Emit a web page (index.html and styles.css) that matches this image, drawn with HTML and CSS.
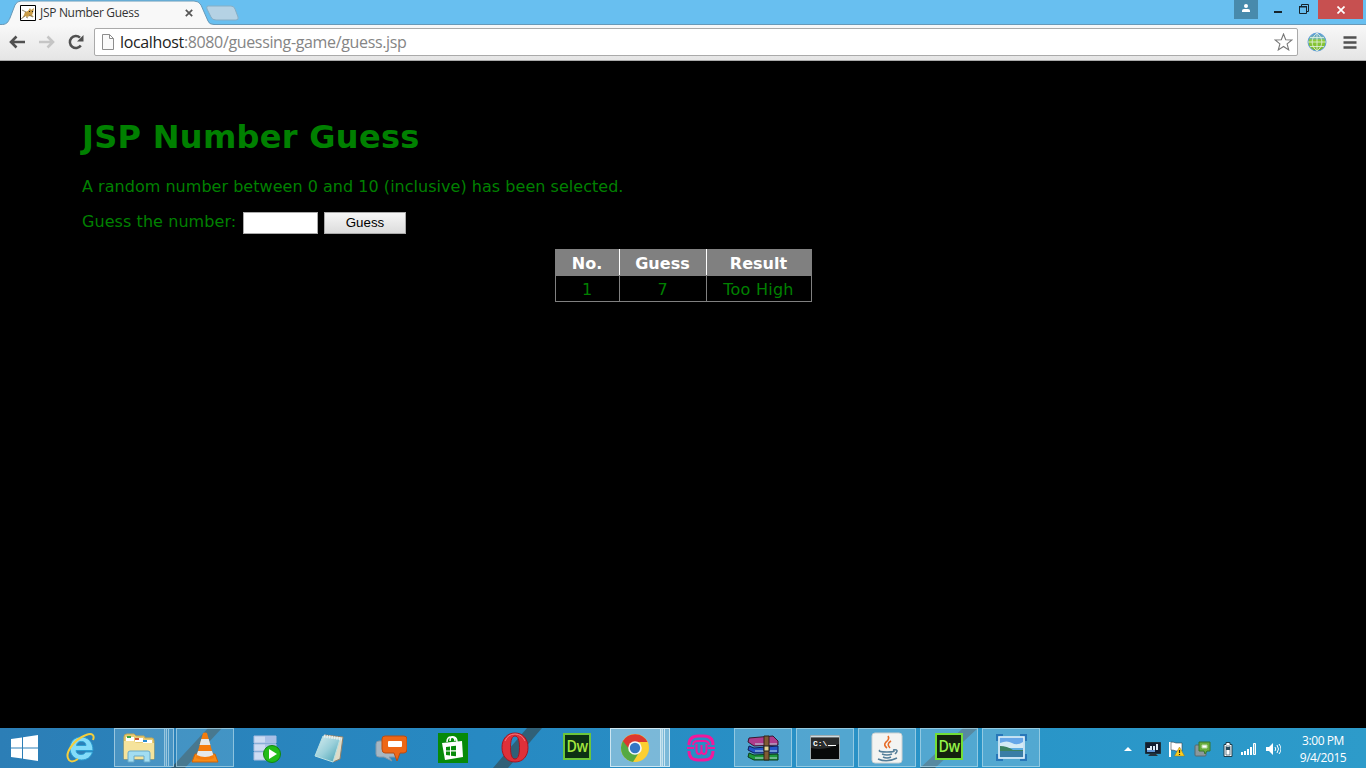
FILE: index.html
```html
<!DOCTYPE html>
<html lang="en">
<head>
<meta charset="utf-8">
<title>JSP Number Guess</title>
<link rel="stylesheet" href="styles.css">
</head>
<body>
<div class="screen">
  <header class="titlebar">
    <svg class="tab-shapes" width="250" height="25" viewBox="0 0 250 25">
      <path d="M0 24.500C7 25 8 22 10 18L15 5Q17 1 21 1H194Q199 1 201 5L208 21Q209 24.500 214 24.500V26H0Z" fill="#f8f8f8" stroke="#6799b8"/>
      <path d="M208 6H231Q234 6 235 9L238 17Q239 20 236 20H216Q212 20 211 17L207 9Q206 6 208 6Z" fill="#b5d2e4" stroke="#86aec5"/>
    </svg>
    <div class="tab">
      <svg class="favicon" width="16" height="16" viewBox="0 0 16 16"><path fill="#fff" stroke="#000" d="M.5.500h15v15H.5z"/><path d="M2 13l2-3 1-3 3-1 2-3 1 2 3-2-1 5-1 2 2 2-4-1-3 1-2-1z" fill="#c99c48"/><path d="M2 5l4 2M1 14l4-3M6 12l2 1M9 10l4 2" fill="none" stroke="#756c50" stroke-width=".8"/><path d="M9 6h1v1H9zM12 6h1v1h-1z" fill="#222"/></svg>
      <span class="tab-title">JSP Number Guess</span>
      <svg width="8" height="8" viewBox="0 0 8 8"><path d="M.8.800l6.400 6.400M7.200.800L.8 7.200" stroke="#555" stroke-width="1.700"/></svg>
    </div>
    <div class="window-controls">
      <span class="profile"><svg width="10" height="9" viewBox="0 0 10 9"><circle cx="5" cy="2" r="2" fill="#fff"/><path d="M1 8V6.500Q1 5 3 5h4q2 0 2 1.500V8z" fill="#fff"/></svg></span>
      <svg class="minimize" width="8" height="2"><path d="M0 0h8v2H0z" fill="#16242c"/></svg>
      <svg class="restore" width="10" height="10" viewBox="0 0 10 10"><path d="M2.500 2V.5h7v7H8" fill="none" stroke="#16242c"/><path d="M.5 2.500h7v7h-7z" fill="none" stroke="#16242c"/><path d="M0 2h8v1.500H0z" fill="#16242c"/></svg>
      <span class="close"><svg width="8" height="8" viewBox="0 0 8 8"><path d="M.5.500l7 7M7.500.500l-7 7" stroke="#fff" stroke-width="1.700"/></svg></span>
    </div>
  </header>

  <nav class="toolbar">
    <svg class="back" width="16" height="14" viewBox="0 0 16 14"><path d="M7.500 1.500L2 7l5.500 5.500M2 7h14" fill="none" stroke="#505050" stroke-width="2.600"/></svg>
    <svg class="forward" width="16" height="14" viewBox="0 0 16 14"><path d="M8.500 1.500L14 7l-5.500 5.500M14 7H0" fill="none" stroke="#c5c5c5" stroke-width="2.600"/></svg>
    <svg class="reload" width="16" height="16" viewBox="0 0 16 16"><path d="M12.800 11.500A6 6 0 1 1 12 3.700" fill="none" stroke="#505050" stroke-width="2.500"/><path d="M15.500 1v6.500H9z" fill="#505050"/></svg>
    <div class="address">
      <svg width="12" height="16" viewBox="0 0 12 16"><path d="M.5.500h7l4 4v11H.5zM7.500.500v4h4" fill="#fafafa" stroke="#8d8d8d"/></svg>
      <span class="url"><span class="host">localhost</span>:8080/guessing-game/guess.jsp</span>
      <svg class="star" width="19" height="18" viewBox="0 0 19 18"><path d="M9.500 1l2.200 5.700 6.200.3-4.800 3.900 1.600 6-5.200-3.400-5.200 3.400 1.600-6L1.100 7l6.200-.3z" fill="#fff" stroke="#777" stroke-width="1.100"/></svg>
    </div>
    <svg class="globe" width="20" height="20" viewBox="0 0 20 20"><defs><linearGradient id="globeFill" x2="0" y2="1"><stop stop-color="#5799d6"/><stop offset=".3" stop-color="#75b8ad"/><stop offset=".4" stop-color="#8ecb37"/><stop offset="1" stop-color="#78b52e"/></linearGradient></defs><circle cx="10" cy="10" r="9" fill="url(#globeFill)" stroke="#5f9eda"/><path d="M10 1v18M1 10h18M3 5.500h14M3 14.500h14M10 1C3.500 6 3.500 14 10 19M10 1c6.500 5 6.500 13 0 18" fill="none" stroke="#e6f3e5" stroke-width=".8"/></svg>
    <svg class="menu" width="14" height="13"><path d="M.5 1.500h13M.5 6.500h13M.5 11.500h13" stroke="#505050" stroke-width="2.600"/></svg>
  </nav>

  <main class="page">
    <h1>JSP Number Guess</h1>
    <p class="intro">A random number between 0 and 10 (inclusive) has been selected.</p>
    <form class="guess-form">
      <label for="guess">Guess the number:</label>
      <input id="guess" type="text">
      <button type="button">Guess</button>
    </form>
    <table class="results">
      <thead><tr><th class="col-no">No.</th><th class="col-guess">Guess</th><th class="col-result">Result</th></tr></thead>
      <tbody><tr><td>1</td><td>7</td><td><span class="verdict">Too High</span></td></tr></tbody>
    </table>
  </main>

  <footer class="taskbar">
    <svg class="streaks" width="1366" height="40"><path d="M208 0h14l-37 40h-14zM527 0h15l-34 40h-15zM963 0h15l-43 40h-15z" fill="#34515d" opacity=".75"/></svg>
    <div class="apps">
      <span class="start"><svg width="27" height="26" viewBox="0 0 27 26"><path d="M0 4l11-1.500v10H0zM12 2.300L27 0v12.500H12zM0 13.500h11v10L0 22zM12 13.500h15V26l-15-2.300z" fill="#fff"/></svg></span>
      <span class="app"><svg width="30" height="32" viewBox="0 0 30 32"><path d="M15 5C8 5 4 10 4 16.500S9 28 15.500 28c5.500 0 9.500-3 11-8h-7c-.8 1.700-2.200 2.500-4.300 2.500-3.100 0-5-1.300-5.200-4H27C27 10 22 5 15 5zM10.500 13.500c.5-2.800 2-4 4.800-4 2.900 0 4.500 1.200 4.700 4z" fill="#83dcfa" stroke="#2b9ed3" fill-rule="evenodd"/><path d="M3 28C-2 22 7 8 20 3c6-2.500 9 0 7 5M3 28c2 2.500 6 1 9-1" fill="none" stroke="#f5ce3c" stroke-width="2"/></svg></span>
      <span class="app stacked dim"><i></i><svg width="32" height="30" viewBox="0 0 32 30"><path d="M1 4Q1 1 4 1h7l2 2h8l1 2h7q2 0 2 3v18H1z" fill="#e8cd76" stroke="#c8a950"/><path d="M3 4h8v4H3zM12 5h8v4h-8zM20 7h9v4h-9z" fill="#fff"/><path d="M4 3h4v2H4z" fill="#3aa640"/><path d="M12 5h4v2h-4z" fill="#d15235"/><path d="M20 7h4v2h-4z" fill="#288bd0"/><path d="M1 8h10l2 2h18v16H1z" fill="#f5e39c"/><path d="M5 29V20q0-2 2-2h18q2 0 2 2v9h-6v-6H11v6z" fill="#a2ddf2" stroke="#6aaac8"/></svg></span>
      <span class="app open dim"><svg width="28" height="31" viewBox="0 0 28 31"><path d="M4 22h20l3 8H1z" fill="#f88b16" stroke="#cf6508"/><path d="M12 1q2-1 4 0l7 25Q14 30 5 26z" fill="#f57c0c"/><path d="M10.300 7h7.400l1.700 6H8.600zM7 19h14l1.300 4Q14 27 5.700 23z" fill="#e5e8e9"/></svg></span>
      <span class="app"><svg class="shift-down" width="28" height="28" viewBox="0 0 28 28"><path d="M1 1h22v7H1zM1 9h22v7H1zM1 17h22v8H1z" fill="#cddcf3" stroke="#a9bce0"/><path d="M12 1h11v7H12zM12 9h11v7H12z" fill="#a9c0e7"/><circle cx="19" cy="19" r="8.500" fill="#22bc19" stroke="#11870d"/><path d="M16 14l8 5-8 5z" fill="#fff"/></svg></span>
      <span class="app"><svg width="32" height="30" viewBox="0 0 32 30"><defs><linearGradient id="noteFill" x2="1" y2="1"><stop stop-color="#d9eef0"/><stop offset=".5" stop-color="#9bd0da"/><stop offset="1" stop-color="#3f9db0"/></linearGradient></defs><path d="M12 2l18 2-3 22-7 3z" fill="#dedbc7" stroke="#91816a"/><path d="M10 3l17 3-7 23L2 23z" fill="url(#noteFill)" stroke="#b9e0e2"/><path d="M11 3l18 3" stroke="#e9efed" stroke-width="3" stroke-dasharray="1.500 1"/></svg></span>
      <span class="app"><svg width="32" height="28" viewBox="0 0 32 28"><path d="M4 7h17v16H14l3 4-8-4H4q-3 0-3-3V10q0-3 3-3z" fill="#a6b7c3" stroke="#8498a8"/><path d="M10 2h19q3 0 3 3v10q0 4-3 4h-4l-3 8-3-8h-9q-3 0-3-4V5q0-3 3-3z" fill="#ee6716" stroke="#b94c12"/><path d="M14 7h12q1 0 1 1v4q0 1-1 1H14q-1 0-1-1V8q0-1 1-1z" fill="#fff"/></svg></span>
      <span class="app"><svg width="30" height="30" viewBox="0 0 30 30"><path d="M0 0h30v30H0z" fill="#078a09"/><path d="M4 10l20-2 1 16-18 3z" fill="#fff"/><path d="M9 9q0-5 4-5 4 0 4 4M12 8q0-5 4-4 3 1 3 5" fill="none" stroke="#fff" stroke-width="1.500"/><path d="M8 14l4-.5v4H8zM13 13.300l5-.5v4.500h-5zM8 18.500h4v4l-4-.5zM13 18.500h5v4.800l-5-.6z" fill="#078a09"/></svg></span>
      <span class="app"><svg width="28" height="31" viewBox="0 0 28 31"><path fill-rule="evenodd" d="M14 1C6 1 1 7 1 15.500S6 30 14 30s13-6 13-14.500S22 1 14 1zm0 3c3 0 4.500 4 4.500 11.500S17 27 14 27 9.500 23 9.500 15.500 11 4 14 4z" fill="#de3039" stroke="#a91420"/><path d="M4 9Q7 2 14 2q7 0 10 7" stroke="#f8777d" fill="none"/></svg></span>
      <span class="app"><span class="dw dw-muted"><span class="dw-letters">Dw</span></span></span>
      <span class="app stacked active"><i></i><svg width="30" height="30" viewBox="0 0 30 30"><circle cx="15" cy="15" r="14" fill="#fbcf32"/><path d="M2.900 8A14 14 0 0 0 13 28.900L20 18 15 9z" fill="#55a942"/><path d="M2.900 8A14 14 0 0 1 27.500 9H15l-5 8z" fill="#dc3830"/><circle cx="15" cy="15" r="6.800" fill="#f5f8fb"/><circle cx="15" cy="15" r="5.200" fill="#3477c5"/></svg></span>
      <span class="app"><svg width="28" height="28" viewBox="0 0 28 28"><path d="M2 11Q2 2 11 2h6q9 0 9 9M2 17q0 9 9 9h6q9 0 9-9" fill="none" stroke="#f0199c" stroke-width="3"/><path d="M6 11q0-4 5-4h6q5 0 5 4M0 14h7M21 14h7M9.500 10v6q0 4 2.500 4t2.500-4v-5M14.500 16q0 4 2.500 4t2.500-4v-6" fill="none" stroke="#f0199c" stroke-width="2"/></svg></span>
      <span class="app open"><svg width="32" height="26" viewBox="0 0 32 26"><path d="M2 3l24-2 5 5v4l-24 1-6-4z" fill="#ae3c8c" stroke="#37172e"/><path d="M2 11l5 2 24-2v7H7l-6-3z" fill="#2356c9" stroke="#101e54"/><path d="M2 18l5 2 24-1v6H7l-6-3z" fill="#1d9939" stroke="#0b3919"/><path d="M8 9h22M8 16h22M8 23h22" stroke="#bad7e2"/><path d="M17 1h5v24h-5z" fill="#815b34" stroke="#30251b"/><path d="M17 11h5v5h-5z" fill="#e3d391" stroke="#222"/></svg></span>
      <span class="app open"><svg class="console" width="30" height="25" viewBox="0 0 30 25"><path d="M.5.500h29v24H.5z" fill="#080909" stroke="#9eacb1"/><path d="M1 1h28v1.500H1z" fill="#cfdbdf"/><path d="M1 13Q15 16 29 9V3H1z" fill="#292b2c"/><text x="3" y="11" class="prompt">C:\</text><path d="M18 10.500h8" stroke="#fff"/></svg></span>
      <span class="app open"><svg width="32" height="32" viewBox="0 0 32 32"><rect x="1" y="1" width="30" height="30" rx="3" fill="#f3f4f2" stroke="#cbd1d2"/><path d="M17 4q2 3-2 6-3 3 1 6M20 9q-5 3-1 7" fill="none" stroke="#e66b26" stroke-width="1.600"/><path d="M9 18q-3 2 7 2t6-2M11 22q5 2 10 0M12 25q4 2 8 0M7 27q9 4 19-1M22 18q7-1 2 4" fill="none" stroke="#537d98" stroke-width="1.500"/></svg></span>
      <span class="app open"><span class="dw"><span class="dw-letters">Dw</span></span></span>
      <span class="app open"><svg width="31" height="27" viewBox="0 0 31 27"><path d="M1 7V1h6M24 1h6v6M1 20v6h6M24 26h6v-6" fill="#5d9fd0" stroke="#2777b9" stroke-width="2"/><path d="M3 3h25v21H3z" fill="#5faee1" stroke="#e9f4fa" stroke-width="1.500"/><path d="M4 4h23v8H4z" fill="#66a6e8"/><path d="M4 9q7-3 12 0t11-1v6H4z" fill="#d4eaf5"/><path d="M4 12q7 0 13 4h10v2H4z" fill="#3c8261"/><path d="M4 17h23v6H4z" fill="#397da5"/></svg></span>
    </div>
    <div class="tray">
      <svg class="up" width="8" height="4"><path d="M4 0l4 4H0z" fill="#fff"/></svg>
      <svg class="network" width="16" height="15" viewBox="0 0 16 15"><path d="M.5.500h15v11H.5z" fill="#111e31" stroke="#1e323b"/><path d="M2 6h3V4h2v4H2zM8 4h2v4H8zM11 2h2v6h-2z" fill="#dce9f5"/><path d="M2 9h8" stroke="#6096d5" stroke-width="2"/><path d="M5 12h6l2 2H3z" fill="#26323b"/></svg>
      <svg class="flag" width="16" height="16" viewBox="0 0 16 16"><path d="M1 1v15" stroke="#fff" stroke-width="2"/><path d="M2 1q3 0 5 1h6v8H7Q5 9 2 9z" fill="#fff" stroke="#33434b" stroke-width=".6"/><path d="M10.500 6l5 9h-10z" fill="#ffcf1e" stroke="#9c7a14" stroke-width=".5"/><path d="M10.500 9v3M10.500 13v1" stroke="#222" stroke-width="1.200"/></svg>
      <svg class="chat" width="17" height="16" viewBox="0 0 17 16"><rect x="1" y="4" width="11" height="11" rx="1" fill="#8b989c" stroke="#5a686d"/><path d="M5 1h11v9h-3l-2 3-1-3H5z" fill="#69ad3e" stroke="#39762e"/><path d="M8 4h5v3H8z" fill="#fff" stroke="#b9d9a5"/></svg>
      <svg class="battery" width="10" height="15" viewBox="0 0 10 15"><path d="M3 .5h4v2h2v12H1v-12h2z" fill="#fff" stroke="#203e4c"/><path d="M3 5h4v3H3z" fill="#284a5c"/><path d="M3 4v9h4V4z" fill="none" stroke="#284a5c" stroke-width=".7"/></svg>
      <svg class="signal" width="16" height="12" viewBox="0 0 16 12"><path d="M0 9h2v3H0zM3 8h2v4H3zM6 6h2v6H6zM9 4h2v8H9z" fill="#fff"/><path d="M12.500.500h2v11h-2z" fill="#88bed2" stroke="#fff"/></svg>
      <svg class="speaker" width="15" height="14" viewBox="0 0 15 14"><path d="M0 5h3l4-4v12L3 9H0z" fill="#fff"/><path d="M9 5q1.500 2 0 4M11 3q3 4 0 8M13 2q4 5 0 10" fill="none" stroke="#fff"/></svg>
      <div class="clock"><span>3:00 PM</span><span class="date">9/4/2015</span></div>
    </div>
  </footer>
</div>
</body>
</html>
```
FILE: styles.css
```css
* { box-sizing: border-box; }
body { margin: 0; overflow: hidden; background: #000; }
svg { display: block; flex: none; }
.screen { display: flex; flex-direction: column; width: 1366px; height: 768px; }

.titlebar { position: relative; flex: none; display: flex; justify-content: space-between; height: 25px; background: #68bff0; border-bottom: 1px solid #6799b8; }
.tab-shapes { position: absolute; left: 0; top: 0; }
.tab { position: relative; display: flex; align-items: center; width: 193px; height: 25px; padding-left: 20px; }
.tab-title { width: 145px; margin-left: 4px; color: #333; font: 12px "Open Sans", sans-serif; letter-spacing: -.31px; white-space: nowrap; }
.window-controls { display: flex; align-items: flex-start; }
.profile { display: flex; align-items: center; justify-content: center; width: 24px; height: 19px; margin-right: 16px; padding-bottom: 2px; background: #488aac; }
.minimize { margin: 11px 17px 0 0; }
.restore { margin: 4px 9px 0 0; }
.close { display: flex; align-items: center; justify-content: center; width: 45px; height: 19px; margin-right: 3px; background: #c75050; }

.toolbar { flex: none; display: flex; align-items: center; height: 36px; padding: 0 9px 1px; background: linear-gradient(#f8f8f8, #e5e5e5); border-bottom: 1px solid #aaa; }
.forward { margin-left: 14px; }
.reload { margin: 0 10px 0 13px; }
.address { display: flex; align-items: center; width: 1206px; height: 28px; padding: 0 4px 0 7px; background: #fff; border: 1px solid #aaa; border-radius: 2px; }
.url { flex: 1; margin-left: 6px; color: #858585; font: 16px/24px "Open Sans", sans-serif; letter-spacing: -.35px; }
.host { color: #222; }
.globe { margin-left: 9px; }
.menu { margin-left: 16px; }

.page { flex: 1; padding: 57px 82px 0; color: #008000; font: 16px/20px "DejaVu Sans", sans-serif; letter-spacing: .03px; }
h1 { margin: 0; font-size: 32px; line-height: 39px; letter-spacing: .3px; white-space: nowrap; }
.intro { margin: 20px 0 14px; }
.guess-form { display: flex; align-items: center; height: 22px; margin-bottom: 16px; }
.guess-form label { width: 161px; letter-spacing: .07px; white-space: nowrap; }
.guess-form input { width: 75px; height: 22px; margin: 1px 6px 0 0; padding: 0; border: 1px solid #aaa; background: #fff; }
.guess-form button { width: 82px; height: 22px; margin: 1px 0 0; padding: 0; border: 1px solid #aaa; background: linear-gradient(#f6f6f6, #dcdcdc); color: #000; font: 13.333px "Liberation Sans", sans-serif; }
.results { width: 257px; margin: 0 auto; border-collapse: collapse; table-layout: fixed; text-align: center; }
.results th { height: 26px; padding: 2px 0 0; background: #808080; color: #fff; border: 1px solid #808080; border-right-color: #fff; font-weight: bold; }
.results th:last-child { border-right-color: #808080; }
.results td { height: 26px; padding: 2px 0 0; border: 1px solid #808080; }
.verdict { letter-spacing: .25px; }
.col-no { width: 64px; } .col-guess { width: 87px; } .col-result { width: 105px; }

.taskbar { position: relative; flex: none; display: flex; justify-content: space-between; height: 40px; background: linear-gradient(90deg, #2c7eb6, #2789c2 35%, #2995c8 75%, #2d9bca); }
.streaks { position: absolute; left: 0; top: 0; }
.apps { position: relative; display: flex; gap: 4px; }
.start { display: flex; align-items: center; width: 48px; padding-left: 11px; }
.app { position: relative; display: flex; align-items: center; justify-content: center; width: 58px; height: 39px; }
.open { background: rgba(145, 198, 222, .4); border: 1px solid rgba(182, 220, 235, .65); }
.open.dim { background: rgba(145, 198, 222, .25); }
.stacked { padding-right: 8px; }
.stacked::before, .stacked::after, .stacked i { content: ""; position: absolute; top: 0; bottom: 0; border: 1px solid #98c6df; background: rgba(165, 204, 225, .25); }
.stacked::before { left: 0; width: 51px; }
.stacked i { left: 50px; width: 5px; }
.stacked::after { left: 54px; width: 4px; }
.active::before, .active::after, .active i { border-color: #cce6f2; background: rgba(191, 221, 234, .55); }
.app svg { position: relative; }
.shift-down { margin-top: 3px; }
.dw { display: flex; align-items: center; justify-content: center; width: 28px; height: 27px; margin-bottom: 3px; border: 2px solid #72df36; background: #14220e; color: #93f348; font: 600 15px/20px "Open Sans", sans-serif; letter-spacing: -.5px; }
.dw-letters { transform: translateY(-1px) scale(.95, 1.12); }
.dw-muted { border-color: #6cc63b; color: #a5e83f; background: #0c3014; }
.prompt { fill: #fff; font: bold 8px "Liberation Mono", monospace; }
.tray { position: relative; display: flex; align-items: center; padding: 2px 19px 0 0; }
.network { margin-left: 13px; } .flag { margin-left: 8px; } .chat { margin-left: 9px; }
.battery { margin-left: 12px; } .signal { margin-left: 8px; } .speaker { margin-left: 9px; }
.clock { display: flex; flex-direction: column; align-items: center; width: 48px; margin-left: 18px; color: #fff; font: 12px/17px "Open Sans", sans-serif; letter-spacing: -.42px; white-space: nowrap; }
```
